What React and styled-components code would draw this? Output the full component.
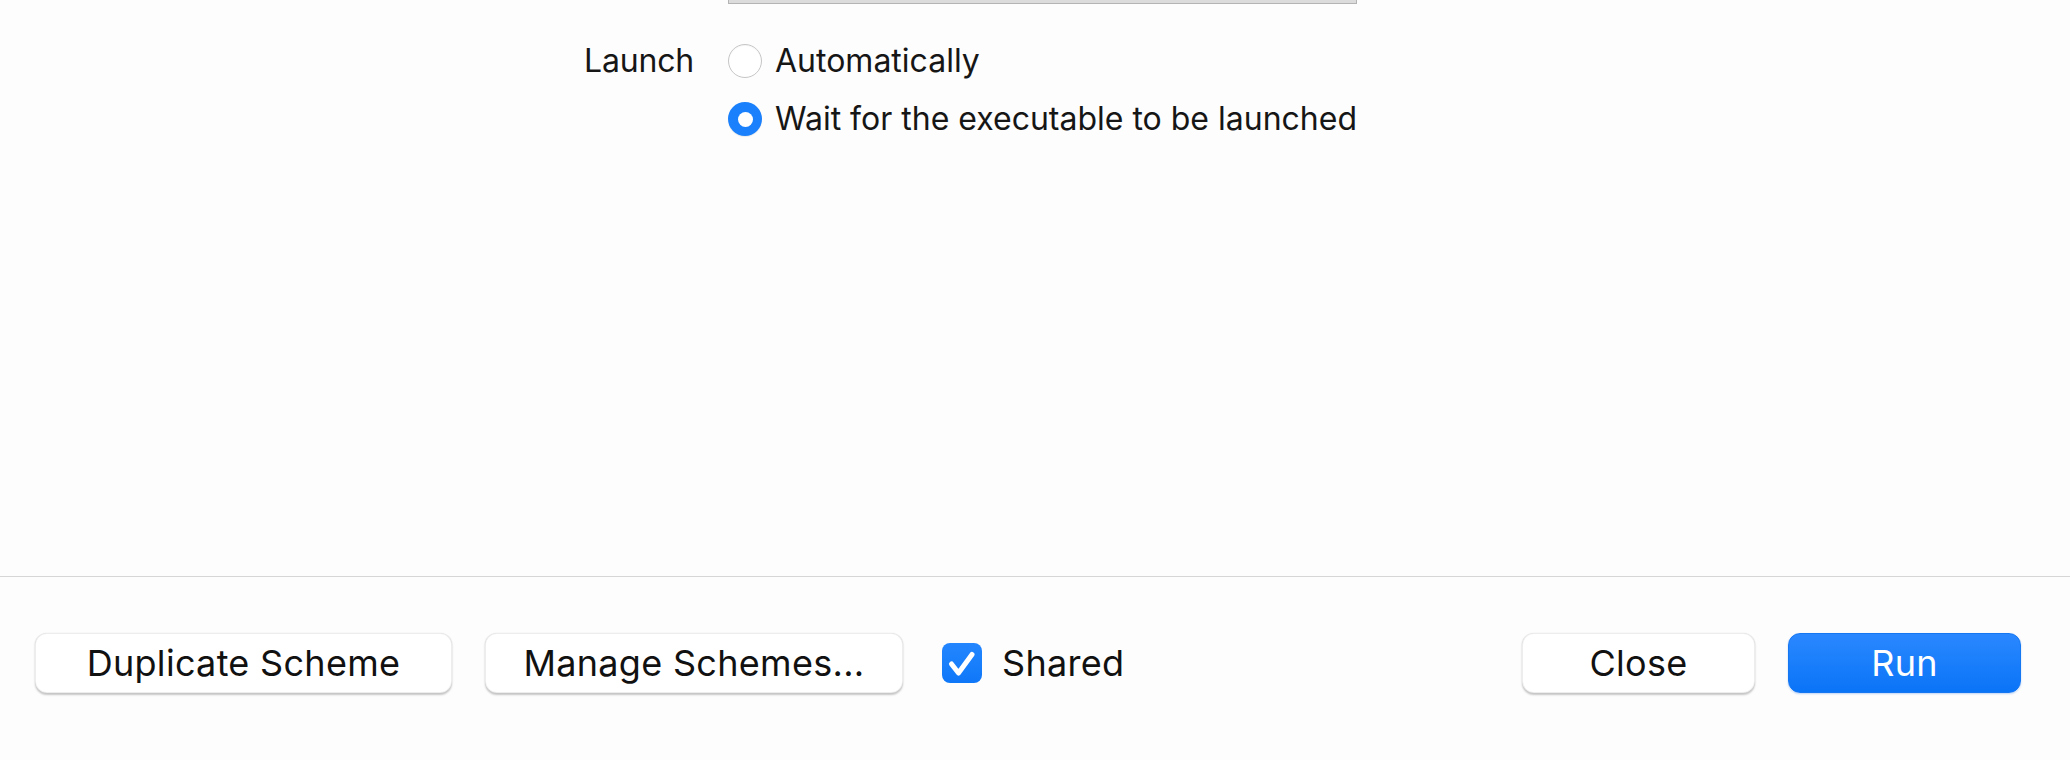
import React from "react";
import styled, { createGlobalStyle } from "styled-components";

const Global = createGlobalStyle`
  html, body {
    margin: 0;
    padding: 0;
    background: #fdfdfd;
  }
  body {
    font-family: Inter, "Noto Sans", "Liberation Sans", sans-serif;
    color: #1a1a1a;
    -webkit-font-smoothing: antialiased;
  }
`;

const Window = styled.div`
  width: 2070px;
  height: 760px;
  display: flex;
  flex-direction: column;
  background: #fdfdfd;
  overflow: hidden;
`;

const Content = styled.div`
  height: 577px;
  border-bottom: 1px solid #d6d6d6;
  box-sizing: border-box;
`;

const Form = styled.div`
  display: grid;
  grid-template-columns: 694px 629px;
  column-gap: 34px;
  row-gap: 37px;
`;

const FieldEdge = styled.div`
  grid-column: 2;
  height: 4px;
  box-sizing: border-box;
  background: #dcdcdc;
  border: 1px solid #b4b4b4;
  border-top: none;
`;

const Label = styled.div`
  justify-self: end;
  height: 40px;
  line-height: 40px;
  font-size: 32px;
  letter-spacing: -0.2px;
  color: #161616;
`;

const RadioGroup = styled.div`
  display: flex;
  flex-direction: column;
  gap: 18px;
`;

const Option = styled.label`
  display: flex;
  align-items: center;
  gap: 13px;
  height: 40px;
  font-size: 32px;
  line-height: 40px;
  color: #161616;
  white-space: nowrap;
`;

const RadioCircle = styled.span`
  width: 34px;
  height: 34px;
  border-radius: 50%;
  box-sizing: border-box;
  flex: none;
  display: flex;
  align-items: center;
  justify-content: center;
  background: ${(p) => (p.$checked ? "#1a80fb" : "#ffffff")};
  border: ${(p) => (p.$checked ? "none" : "1.5px solid #c6c6c6")};
  box-shadow: ${(p) =>
    p.$checked ? "0 1px 1px rgba(0,0,0,0.08)" : "inset 0 1px 1px rgba(0,0,0,0.04)"};
  &::after {
    content: "";
    display: ${(p) => (p.$checked ? "block" : "none")};
    width: 15px;
    height: 15px;
    border-radius: 50%;
    background: #ffffff;
  }
`;

const Footer = styled.div`
  flex: 1;
  display: flex;
  align-items: flex-start;
  padding: 56px 49px 0 35px;
`;

const Group = styled.div`
  display: flex;
  align-items: center;
  gap: ${(p) => p.$gap || 33}px;
`;

const Spacer = styled.div`
  flex: 1;
`;

const Button = styled.button`
  width: ${(p) => p.$w}px;
  height: 60px;
  box-sizing: border-box;
  border-radius: 12px;
  font-family: Inter, "Noto Sans", "Liberation Sans", sans-serif;
  font-size: 36px;
  letter-spacing: 0.3px;
  padding: 0;
  cursor: default;
  color: ${(p) => (p.$primary ? "#ffffff" : "#111111")};
  background: ${(p) =>
    p.$primary ? "linear-gradient(#2a88ff, #0a74f7)" : "#ffffff"};
  border: ${(p) =>
    p.$primary ? "1px solid #1677f3" : "1px solid rgba(0,0,0,0.07)"};
  box-shadow: ${(p) =>
    p.$primary
      ? "0 1px 2px rgba(0,90,220,0.25)"
      : "0 1.5px 2px rgba(0,0,0,0.22), 0 0 1px rgba(0,0,0,0.1)"};
`;

const CheckRow = styled.label`
  display: flex;
  align-items: center;
  gap: 20px;
  margin-left: 6px;
  font-size: 36px;
  letter-spacing: 0.3px;
  color: #111111;
`;

const CheckBox = styled.span`
  width: 40px;
  height: 40px;
  border-radius: 8px;
  background: linear-gradient(#2386ff, #0f78f8);
  display: flex;
  align-items: center;
  justify-content: center;
  flex: none;
`;

function Radio({ checked, children }) {
  return (
    <Option>
      <RadioCircle $checked={checked} />
      {children}
    </Option>
  );
}

export default function App() {
  return (
    <>
      <Global />
      <Window>
        <Content>
          <Form>
            <FieldEdge />
            <Label>Launch</Label>
            <RadioGroup>
              <Radio>Automatically</Radio>
              <Radio checked>Wait for the executable to be launched</Radio>
            </RadioGroup>
          </Form>
        </Content>
        <Footer>
          <Group>
            <Button $w={417}>Duplicate Scheme</Button>
            <Button $w={418}>Manage Schemes...</Button>
            <CheckRow>
              <CheckBox>
                <svg width="40" height="40" viewBox="0 0 40 40">
                  <path
                    d="M9.5 21 L16.5 30 L30 11.5"
                    fill="none"
                    stroke="#ffffff"
                    strokeWidth="5"
                    strokeLinecap="round"
                    strokeLinejoin="round"
                  />
                </svg>
              </CheckBox>
              Shared
            </CheckRow>
          </Group>
          <Spacer />
          <Group>
            <Button $w={233}>Close</Button>
            <Button $w={233} $primary>
              Run
            </Button>
          </Group>
        </Footer>
      </Window>
    </>
  );
}
